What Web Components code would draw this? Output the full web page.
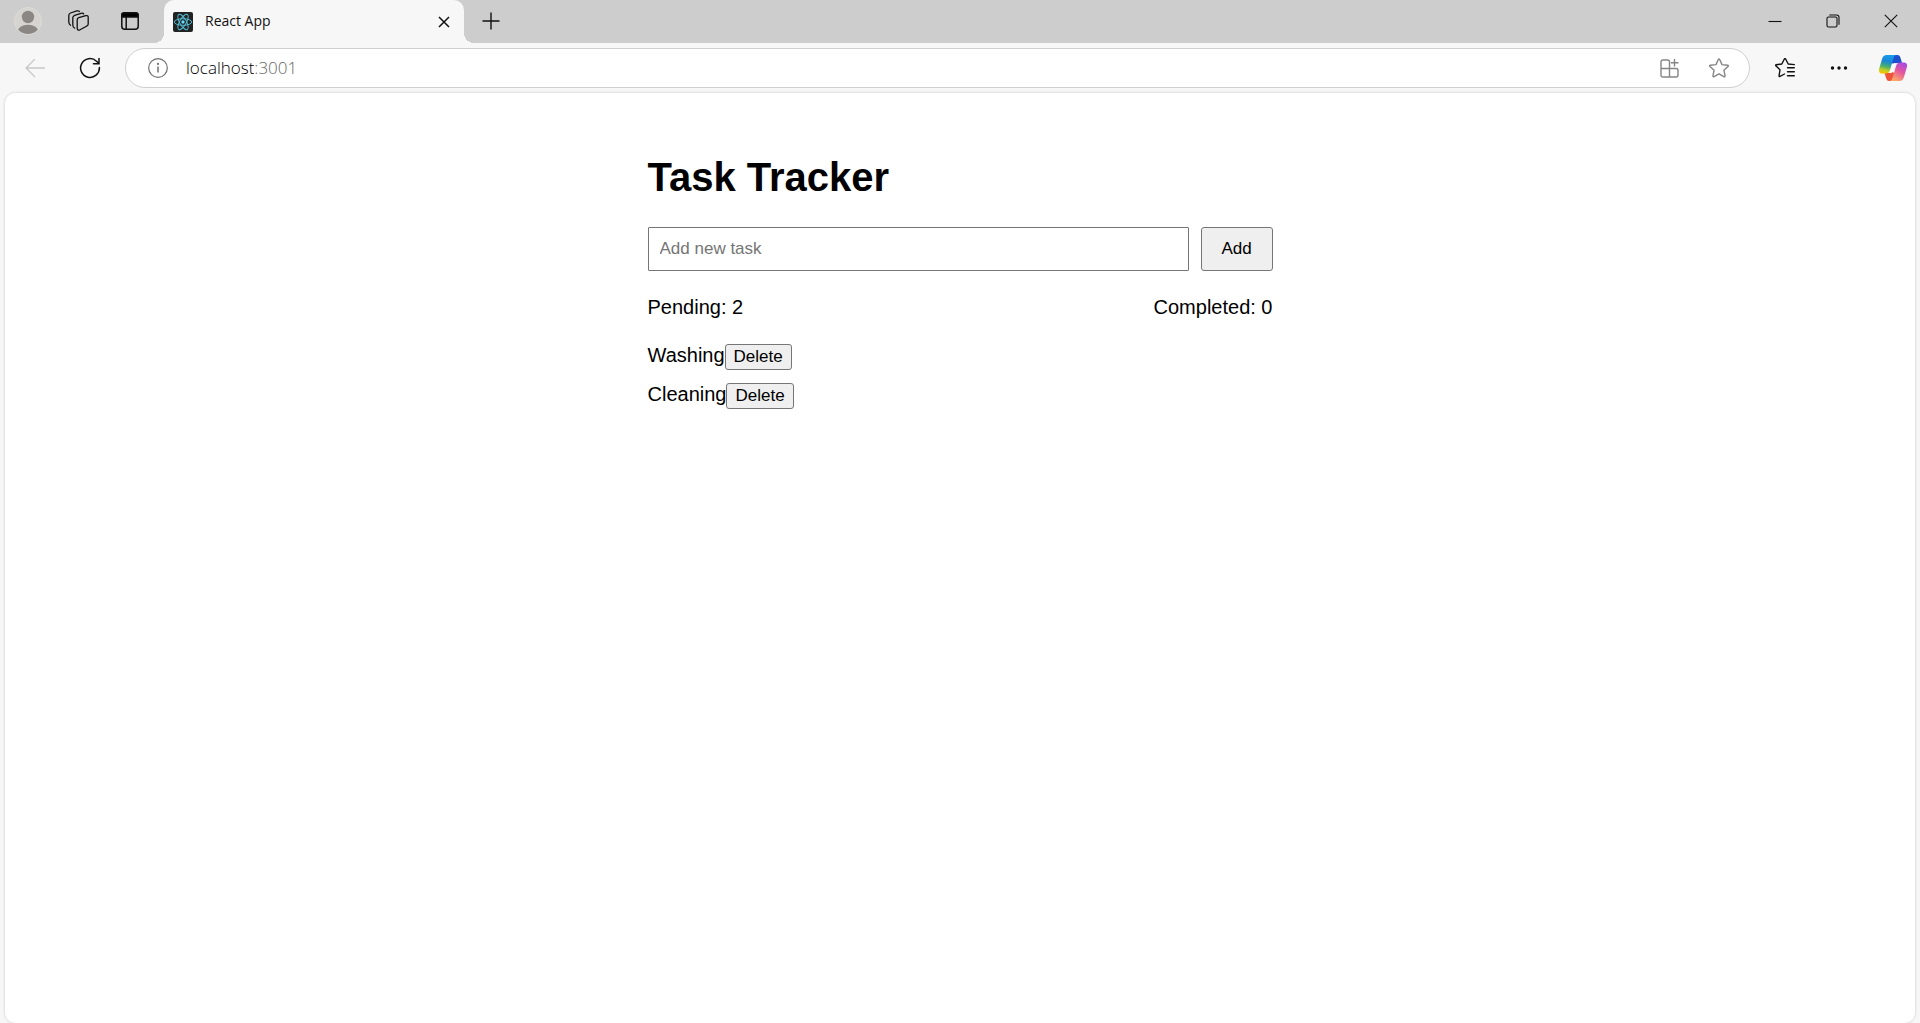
<!DOCTYPE html>
<html lang="en">
<head>
<meta charset="utf-8">
<title>React App</title>
<style>
  body { margin: 0; min-height: 100vh; display: flex; font-family: "Liberation Sans", Arial, sans-serif; color: #000; }
  browser-window { flex: 1; }
</style>
</head>
<body>
<browser-window>
  <tab-strip slot="chrome"><browser-tab>React App</browser-tab></tab-strip>
  <tool-bar slot="chrome"></tool-bar>
  <task-tracker></task-tracker>
</browser-window>

<script>
const define = (name, html, setup) => {
  const template = document.createElement('template');
  template.innerHTML = html;
  customElements.define(name, class extends HTMLElement {
    constructor() {
      super();
      this.attachShadow({ mode: 'open' }).append(template.content.cloneNode(true));
    }
    connectedCallback() { if (setup) setup(this, this.shadowRoot); }
  });
};

define('browser-window', `
  <style>
    :host { display: flex; flex-direction: column; background: #f7f7f7; }
    main { flex: 1; margin: 0 5px; background: #fff; border-radius: 10px; box-shadow: 0 0 3px rgba(0,0,0,.2); }
  </style>
  <slot name="chrome"></slot>
  <main><slot></slot></main>`);

define('icon-button', `
  <style>
    :host { display: flex; }
    button { flex: 1; display: flex; align-items: center; justify-content: center; padding: 0; border: 0; background: none; color: inherit; }
  </style>
  <button type="button"><slot></slot></button>`, (host, root) => {
  root.querySelector('button').setAttribute('aria-label', host.getAttribute('label'));
  root.querySelector('button').disabled = host.hasAttribute('disabled');
});

define('tab-strip', `
  <style>
    :host { display: flex; height: 43px; background: #cdcdcd; color: #111; padding-left: 2px; }
    icon-button { padding-bottom: 1px; }
    .left { width: 51px; }
    ::slotted(browser-tab) { margin-left: 9px; }
    .new { width: 53px; }
    .space { flex: 1; }
    .win { width: 58px; }
    svg { display: block; fill: none; stroke: currentColor; }
  </style>
  <icon-button class="left" label="Profile">
    <svg width="28" height="28" viewBox="0 0 28 28" stroke="none"><defs><clipPath id="c"><circle cx="14" cy="14" r="13"/></clipPath></defs><circle cx="14" cy="14" r="13.5" fill="#d6d4d0" stroke="#dddbd6"/><g clip-path="url(#c)" fill="#8b8784" stroke="none"><circle cx="14" cy="10" r="6.2"/><ellipse cx="14" cy="25" rx="10.5" ry="7.3"/></g></svg>
  </icon-button>
  <icon-button class="left" label="Workspaces">
    <svg width="22" height="22" viewBox="1 1 22 22" stroke-width="1.3" stroke-linejoin="round" stroke-linecap="round"><path d="M11.800 8.700 18.800 6.600Q21.200 6.200 21.200 8.300V15Q21.200 16.600 19.500 17.200L13 20.800Q10.200 21.800 10.200 19V11Q10.200 9.200 11.800 8.700Z"/><path d="M7.600 19.200Q5.800 18.500 5.800 15.700V8.800Q5.800 7.100 7.600 6.400L14 4.300Q16.200 3.800 16.700 5"/><path d="M3.500 16.200Q1.800 15 1.800 13V6.400Q1.800 4.600 3.500 4L9.800 1.900Q11.800 1.500 12.400 2.500"/></svg>
  </icon-button>
  <icon-button class="left" label="Tab actions menu">
    <svg width="18" height="18" viewBox="0 0 18 18" stroke-width="1.5"><rect x=".8" y=".8" width="16.4" height="16.4" rx="3"/><path d="M1 1.5Q1.5 1 3 1H15Q16.500 1 17 2V5H1Z" fill="#000"/><path d="M5.200 5V17"/></svg>
  </icon-button>
  <slot></slot>
  <icon-button class="new" label="New tab">
    <svg width="18" height="18" viewBox="0 0 18 18" stroke-width="1.4"><path d="M9 .5V17.500M.5 9H17.500"/></svg>
  </icon-button>
  <div class="space"></div>
  <icon-button class="win" label="Minimize">
    <svg width="14" height="14" viewBox="0 0 14 14"><path d="M.5 7.500H13.500" stroke-width="1.100"/></svg>
  </icon-button>
  <icon-button class="win" label="Restore">
    <svg width="14" height="14" viewBox="0 0 14 14" stroke-width="1.100"><rect x="1" y="3" width="10" height="10" rx="1.500"/><path d="M3.300 1H10.500Q13 1 13 3.500V10.700"/></svg>
  </icon-button>
  <icon-button class="win" label="Close window">
    <svg width="14" height="14" viewBox="0 0 14 14" stroke-width="1.100"><path d="M.8.8 13.200 13.200M13.200.8.8 13.200"/></svg>
  </icon-button>`);

define('browser-tab', `
  <style>
    :host { position: relative; display: flex; align-items: center; box-sizing: border-box; width: 300px; padding: 0 10px 0 9px; gap: 12px;
      background: #f7f7f7; border-radius: 10px 10px 0 0; font: 14px/20px "Open Sans", sans-serif; color: #111; }
    :host::before, :host::after { content: ""; position: absolute; bottom: 0; width: 10px; height: 10px; }
    :host::before { right: 100%; background: radial-gradient(circle at 0 0, transparent 10px, #f7f7f7 10px); }
    :host::after { left: 100%; background: radial-gradient(circle at 100% 0, transparent 10px, #f7f7f7 10px); }
    .title { flex: 1; padding-bottom: 2px; }
    .close { width: 20px; }
    svg { display: block; fill: none; stroke: currentColor; }
  </style>
  <svg width="20" height="20" viewBox="0 0 20 20"><rect width="20" height="20" rx="2" fill="#222" stroke="none"/><g stroke="#53b9d1" stroke-width="1"><ellipse cx="10" cy="10" rx="8.700" ry="3.300"/><ellipse cx="10" cy="10" rx="8.700" ry="3.300" transform="rotate(60 10 10)"/><ellipse cx="10" cy="10" rx="8.700" ry="3.300" transform="rotate(120 10 10)"/></g><circle cx="10" cy="10" r="1.700" fill="#61dafb" stroke="none"/></svg>
  <span class="title"><slot></slot></span>
  <icon-button class="close" label="Close tab"><svg width="12" height="12" viewBox="0 0 12 12" stroke-width="1.500"><path d="M1 1 11 11M11 1 1 11"/></svg></icon-button>`);

define('tool-bar', `
  <style>
    :host { display: flex; align-items: stretch; height: 40px; padding: 5px 0 5px 7px; color: #111; }
    .nav { width: 55px; }
    .back { color: #c8c8c8; }
    address-bar { flex: 1; margin: 0 8px; }
    .tool { width: 54px; }
    svg { display: block; fill: none; stroke: currentColor; }
  </style>
  <icon-button class="nav back" label="Back" disabled>
    <svg width="20" height="20" viewBox="0 0 20 20" stroke-width="1.300" stroke-linecap="round" stroke-linejoin="round"><path d="M19.500 10H1M9.500 1.500 1 10 9.500 18.500"/></svg>
  </icon-button>
  <icon-button class="nav" label="Refresh">
    <svg width="22" height="22" viewBox="0 0 22 22" stroke-width="1.500" stroke-linecap="round"><path d="M20.400 10.500A9.400 9.400 0 1 1 17.500 4.200L20 6.500M20 1.500V6.700H14.500"/></svg>
  </icon-button>
  <address-bar></address-bar>
  <icon-button class="tool" label="Favorites">
    <svg width="20" height="20" viewBox="0 0 20 20" stroke-width="1.400" stroke-linejoin="round" stroke-linecap="round"><path d="M19.300 6.600 13.200 6 10.500.8Q10 .1 9.500.8L6.800 6 1 6.800Q.3 7.200.8 7.800L5 11.800 4 18Q4.200 18.800 5 18.400L9.500 16M12.500 9.800H19.300M12.500 13.800H19.300M12.500 17.800H19.300"/></svg>
  </icon-button>
  <icon-button class="tool" label="Settings and more">
    <svg width="18" height="6" viewBox="0 0 18 6"><g fill="#111" stroke="none"><circle cx="2.500" cy="3" r="1.700"/><circle cx="9" cy="3" r="1.700"/><circle cx="15.500" cy="3" r="1.700"/></g></svg>
  </icon-button>
  <icon-button class="tool" label="Copilot">
    <svg width="28" height="26" viewBox="0 0 28 26"><defs>
      <linearGradient id="a" x1=".6" y1="0" x2=".4" y2="1"><stop stop-color="#159ee8"/><stop offset=".35" stop-color="#1a86d8"/><stop offset=".62" stop-color="#43ad72"/><stop offset=".85" stop-color="#c4cf22"/><stop offset="1" stop-color="#f5c400"/></linearGradient>
      <linearGradient id="b" x1=".8" y1="0" x2=".3" y2="1"><stop stop-color="#a34be8"/><stop offset=".45" stop-color="#e4559f"/><stop offset="1" stop-color="#ffab66"/></linearGradient></defs>
      <g stroke="none"><path d="M13 0H18.500Q20.600 0 21.300 2.200L23 8H18Q16 8 15.300 10L13 8Z" fill="#1c50cf"/>
      <path d="M15 26H10Q8 26 7.300 23.800L5.500 18H10Q12 18 12.700 16L15 18Z" fill="#ee5439"/>
      <path d="M7.500 0H17Q15.200.4 14.500 3L11 15Q10 18.500 7 18.500H3Q-.8 18.500.2 13.500L3.200 3.500Q4.400 0 7.500 0Z" fill="url(#a)"/>
      <path d="M20.500 26H11Q12.800 25.600 13.500 23L17 11Q18 7.500 21 7.500H25Q28.800 7.500 27.800 12.500L24.800 22.500Q23.600 26 20.500 26Z" fill="url(#b)"/>
      <path d="M17.500 8H15.500Q14 8 13.400 10L11.300 16Q10.700 18 9.500 18H11.800Q13.600 18 14.200 16L16 10Q16.500 8.200 17.500 8Z" fill="#fbfbfb"/></g></svg>
  </icon-button>`);

define('address-bar', `
  <style>
    :host { display: flex; align-items: center; box-sizing: border-box; border: 1px solid #cfcfcf; border-radius: 20px; background: #fff; padding: 0 5px 0 8px; }
    .info { width: 48px; color: #707070; }
    label { flex: 1; display: flex; align-items: center; padding-left: 4px; font: 300 17px/24px "Open Sans", sans-serif; color: #666; }
    input { field-sizing: content; padding: 0; border: 0; outline: 0; background: none; font: inherit; color: #000; }
    .act { width: 50px; color: #858585; }
    svg { display: block; fill: none; stroke: currentColor; }
  </style>
  <icon-button class="info" label="View site information">
    <svg width="20" height="20" viewBox="0 0 20 20"><circle cx="10" cy="10" r="9.300" stroke-width="1.200"/><path d="M10 8.500V14.500" stroke-width="1.500"/><circle cx="10" cy="5.900" r="1.100" fill="#707070" stroke="none"/></svg>
  </icon-button>
  <label><input type="text" aria-label="Address" value="localhost" spellcheck="false"><span>:3001</span></label>
  <icon-button class="act" label="Apps">
    <svg width="19" height="19" viewBox="0 0 19 19" stroke-width="1.400"><path d="M9.500 18H3Q1 18 1 16V3Q1 1 3 1H7.500Q9.500 1 9.500 3V18H16Q18 18 18 16V11.500Q18 9.500 16 9.500H1M14.500 0V7.500M10.800 3.800H18.500"/></svg>
  </icon-button>
  <icon-button class="act" label="Add to favorites">
    <svg width="20" height="20" viewBox="0 0 20 20" stroke-width="1.400" stroke-linejoin="round"><path d="M9.300 1.500Q10 .3 10.700 1.500L13 6.600 18.600 7.200Q19.900 7.500 19 8.500L14.900 12.200 16.100 17.800Q16.100 19.100 14.900 18.600L10 15.800 5.100 18.600Q3.900 19.100 3.900 17.800L5.100 12.200 1 8.500Q.1 7.500 1.400 7.200L7 6.600Z"/></svg>
  </icon-button>`);

define('task-item', `
  <style>
    :host { display: flex; align-items: baseline; line-height: 23px; }
    button { box-sizing: border-box; height: 26px; padding: 0 8px; border: 1px solid #767676; border-radius: 3px; background: #efefef; color: #000; font: 17px/20px "Liberation Sans", Arial, sans-serif; }
  </style>
  <span><slot></slot></span><button type="button">Delete</button>`, (host, root) => {
  root.querySelector('button').onclick = () => host.remove();
});

define('task-tracker', `
  <style>
    :host { display: block; max-width: 625px; margin: 0 auto; padding: 61px 20px 20px; font: 20px/23px "Liberation Sans", Arial, sans-serif; }
    h1 { margin: 0 0 27px; font-size: 40px; line-height: 46px; }
    form { display: flex; gap: 12px; margin-bottom: 25px; }
    input, button { box-sizing: border-box; height: 44px; border: 1px solid #767676; font: 17px/20px "Liberation Sans", Arial, sans-serif; color: #000; }
    input { flex: 1; min-width: 0; padding: 0 11px; border-radius: 1px; background: #fff; }
    input::placeholder { color: #757575; }
    button { width: 72px; padding: 0; border-radius: 3px; background: #efefef; }
    .counts { display: flex; justify-content: space-between; margin-bottom: 25px; }
    .list { display: flex; flex-direction: column; gap: 13px; }
  </style>
  <h1>Task Tracker</h1>
  <form><input type="text" placeholder="Add new task" aria-label="Add new task"><button type="submit">Add</button></form>
  <div class="counts"><span>Pending: 2</span><span>Completed: 0</span></div>
  <div class="list"><task-item>Washing</task-item><task-item>Cleaning</task-item></div>`, (host, root) => {
  root.querySelector('form').onsubmit = (event) => {
    event.preventDefault();
    const field = root.querySelector('input');
    if (!field.value.trim()) return;
    const item = document.createElement('task-item');
    item.textContent = field.value.trim();
    root.querySelector('.list').append(item);
    field.value = '';
  };
});
</script>
</body>
</html>
